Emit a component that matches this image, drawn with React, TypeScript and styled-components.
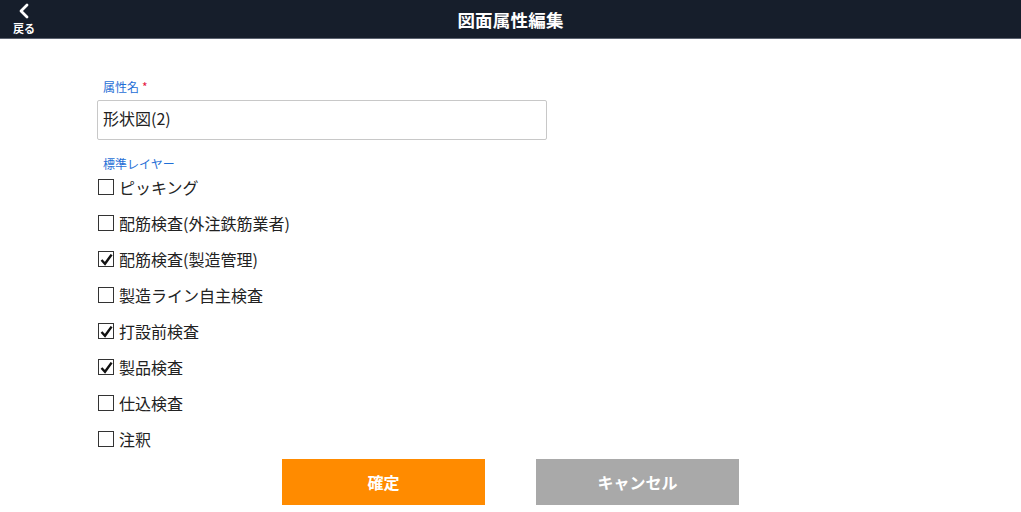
import React, { useState } from "react";
import styled, { createGlobalStyle } from "styled-components";

const Global = createGlobalStyle`
  html, body { margin: 0; padding: 0; background: #ffffff; }
  body { font-family: "Noto Sans CJK JP", "Noto Sans", sans-serif; color: #222; }
  * { box-sizing: border-box; }
`;

const Page = styled.div`
  width: 1021px;
  height: 512px;
  display: flex;
  flex-direction: column;
  overflow: hidden;
`;

const Header = styled.header`
  height: 39px;
  flex: none;
  background: #161e2b;
  border-bottom: 1px solid #5c6370;
  display: grid;
  grid-template-columns: 48px 1fr 48px;
  align-items: center;
`;

const BackButton = styled.button`
  border: none;
  background: none;
  color: #fff;
  padding: 0;
  height: 38px;
  display: flex;
  flex-direction: column;
  align-items: center;
  justify-content: flex-start;
  padding-top: 3px;
  cursor: pointer;
  font-family: inherit;
`;

const BackText = styled.span`
  font-size: 11px;
  font-weight: 700;
  line-height: 13px;
  margin-top: 3px;
`;

const Title = styled.h1`
  margin: 0;
  text-align: center;
  color: #fff;
  font-size: 17.5px;
  font-weight: 700;
  letter-spacing: 0.2px;
`;

const Form = styled.div`
  padding: 40px 0 0 97px;
  display: flex;
  flex-direction: column;
`;

const FieldLabel = styled.div`
  font-size: 12px;
  line-height: 16px;
  color: #1f6fd6;
  padding-left: 6px;
`;

const Required = styled.span`
  color: #e5173f;
  margin-left: 3px;
`;

const TextInput = styled.input`
  margin-top: 5px;
  width: 450px;
  height: 40px;
  border: 1px solid #c8c8c8;
  border-radius: 2px;
  padding: 0 5px 5px;
  font-size: 16px;
  font-family: inherit;
  color: #222;
  outline: none;
`;

const LayerLabel = styled(FieldLabel)`
  margin-top: 16px;
`;

const List = styled.div`
  display: flex;
  flex-direction: column;
  margin-top: -3px;
`;

const Row = styled.label`
  height: 36px;
  display: flex;
  align-items: center;
  gap: 5px;
  padding-left: 1px;
  font-size: 16px;
  color: #222;
  cursor: pointer;
`;

const Box = styled.span`
  width: 16px;
  height: 16px;
  border: 1px solid #333;
  background: #fff;
  display: flex;
  align-items: center;
  justify-content: center;
  flex: none;
`;

const Buttons = styled.div`
  display: flex;
  justify-content: center;
  gap: 51px;
  margin-top: 2px;
`;

const ActionButton = styled.button<{ $tone: "primary" | "muted" }>`
  width: 203px;
  height: 46px;
  border: none;
  background: ${(p) => (p.$tone === "primary" ? "#ff8b00" : "#a9a9a9")};
  color: #fff;
  font-family: inherit;
  font-size: 16px;
  font-weight: 700;
  cursor: pointer;
`;

const layers = [
  { name: "ピッキング", checked: false },
  { name: "配筋検査(外注鉄筋業者)", checked: false },
  { name: "配筋検査(製造管理)", checked: true },
  { name: "製造ライン自主検査", checked: false },
  { name: "打設前検査", checked: true },
  { name: "製品検査", checked: true },
  { name: "仕込検査", checked: false },
  { name: "注釈", checked: false },
];

const Check = () => (
  <svg width="13" height="13" viewBox="0 0 13 13">
    <path d="M1.5 7 L5 10.8 L11.6 1.6" fill="none" stroke="#111" strokeWidth="2.4" strokeLinejoin="miter" />
  </svg>
);

export default function App() {
  const [state, setState] = useState(layers.map((l) => l.checked));
  return (
    <Page>
      <Global />
      <Header>
        <BackButton>
          <svg width="14" height="16" viewBox="0 0 14 16">
            <path d="M10 2 L4 8 L10 14" fill="none" stroke="#fff" strokeWidth="2.8" strokeLinecap="round" strokeLinejoin="round" />
          </svg>
          <BackText>戻る</BackText>
        </BackButton>
        <Title>図面属性編集</Title>
        <span />
      </Header>
      <Form>
        <FieldLabel>
          属性名<Required>*</Required>
        </FieldLabel>
        <TextInput defaultValue="形状図(2)" />
        <LayerLabel>標準レイヤー</LayerLabel>
        <List>
          {layers.map((l, i) => (
            <Row
              key={l.name}
              onClick={() => setState((s) => s.map((v, j) => (j === i ? !v : v)))}
            >
              <Box>{state[i] && <Check />}</Box>
              {l.name}
            </Row>
          ))}
        </List>
      </Form>
      <Buttons>
        <ActionButton $tone="primary">確定</ActionButton>
        <ActionButton $tone="muted">キャンセル</ActionButton>
      </Buttons>
    </Page>
  );
}
